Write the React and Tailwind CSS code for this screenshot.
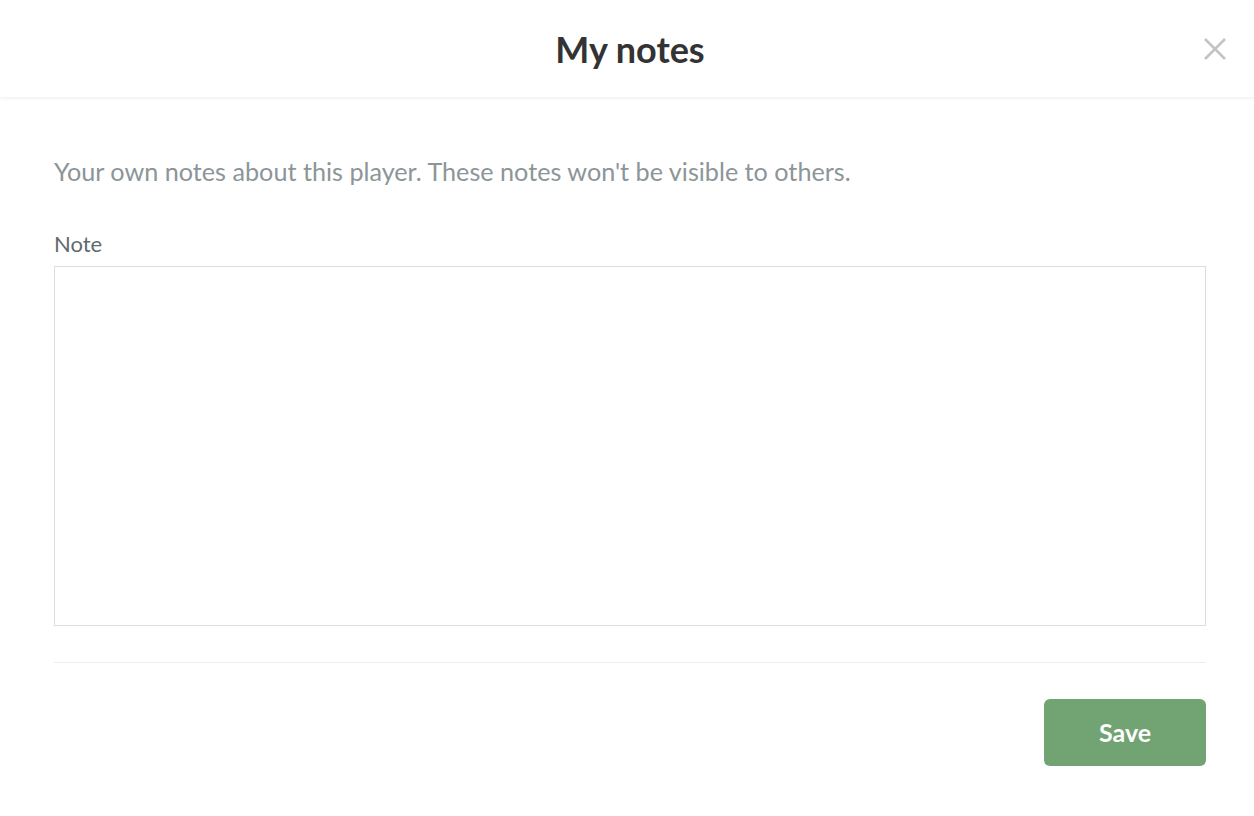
export default function App() {
  return (
    <div className="min-h-[816px] bg-white font-['Lato',sans-serif]">
      <header className="relative flex h-[97px] items-center justify-center bg-white pl-[6px] shadow-[0_1px_4px_rgba(0,0,0,0.08)]">
        <h1 className="text-[36px] font-bold text-[#333333]">My notes</h1>
        <button className="absolute right-[27px] top-[37px] text-[#c0c4c6]">
          <svg width="24" height="24" viewBox="0 0 24 24" fill="none" stroke="currentColor" strokeWidth="2.5">
            <path d="M2 2L22 22M22 2L2 22" />
          </svg>
        </button>
      </header>

      <main className="pl-[54px] pr-[48px] pt-[59px]">
        <p className="text-[25.2px] leading-[30px] text-[#8c9598]">
          Your own notes about this player. These notes won't be visible to others.
        </p>

        <label className="mt-[45px] block text-[22px] leading-[26px] text-[#5f6a6d]">Note</label>
        <textarea className="mt-[9px] block h-[360px] w-full resize-none border border-[#dcdcdc] outline-none" />

        <div className="mt-[36px] border-t border-[#eeeeee]" />

        <div className="flex justify-end pt-[36px]">
          <button className="h-[67px] w-[162px] rounded-[6px] bg-[#71a373] text-[25px] font-bold text-white">
            Save
          </button>
        </div>
      </main>
    </div>
  );
}
